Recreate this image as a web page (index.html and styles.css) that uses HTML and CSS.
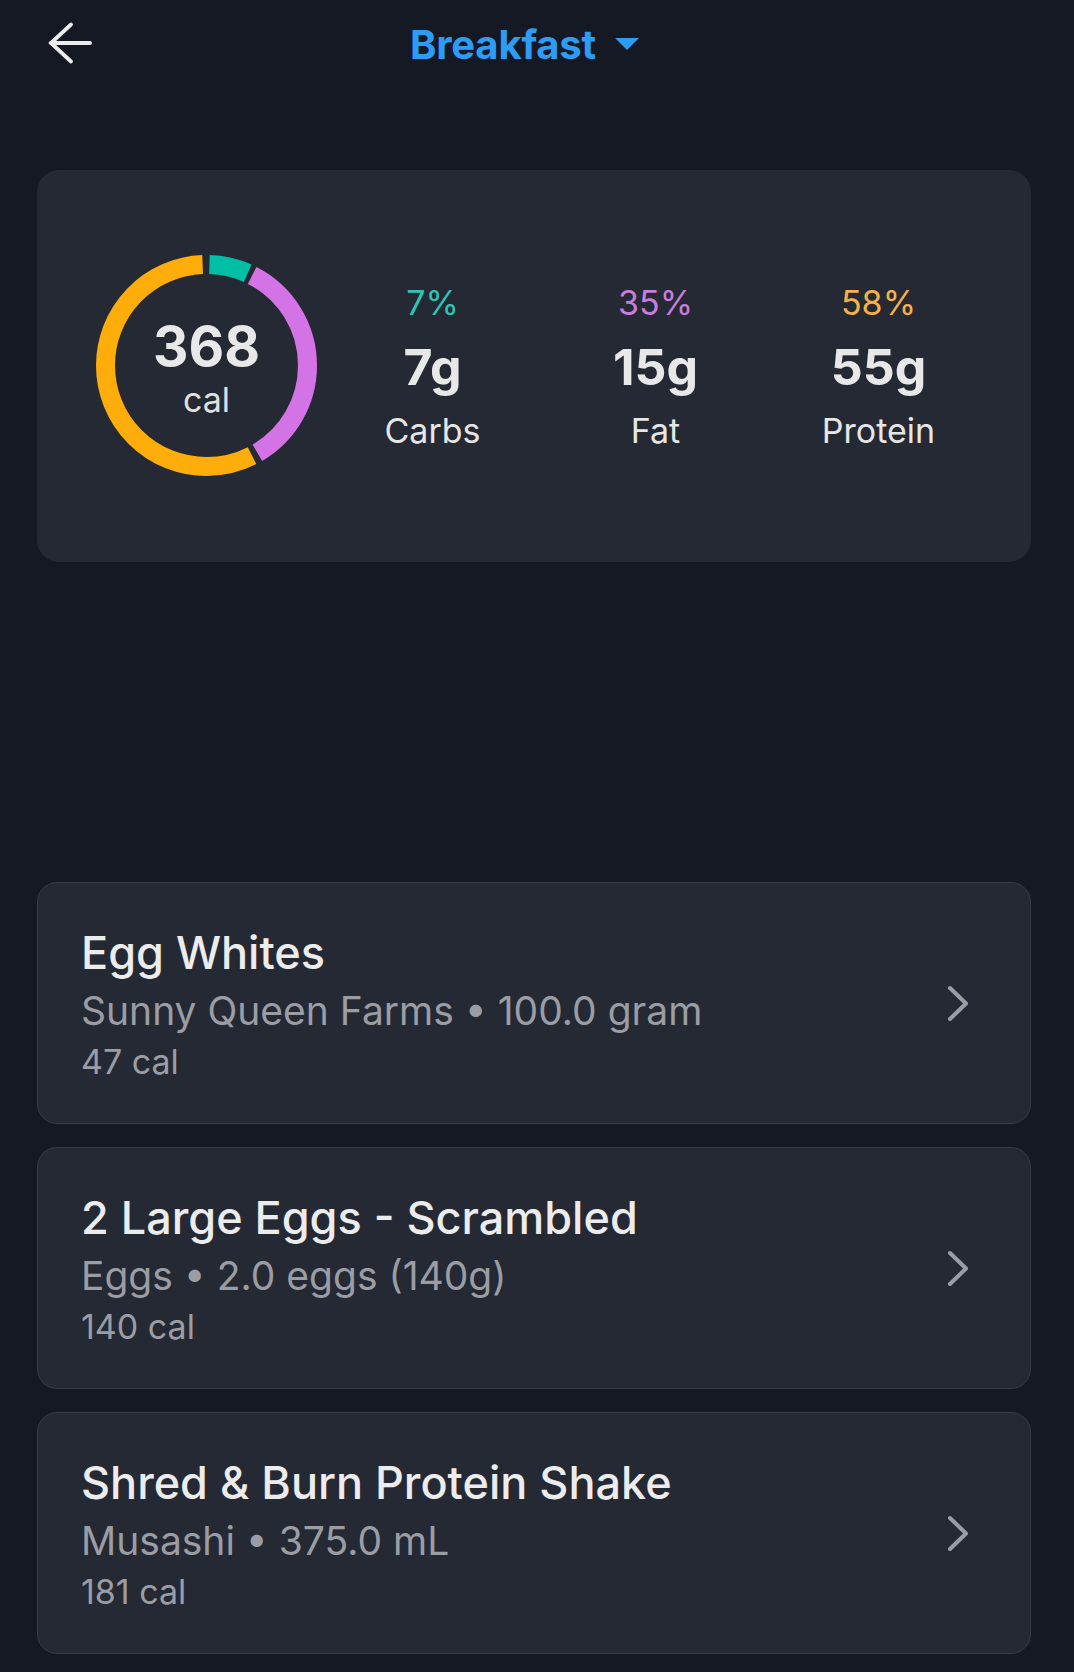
FILE: index.html
```html
<!DOCTYPE html>
<html lang="en">
<head>
<meta charset="utf-8">
<title>Breakfast</title>
<link rel="stylesheet" href="styles.css">
</head>
<body>
<div class="screen">
  <header class="topbar">
    <button class="back" aria-label="Back">
      <svg width="50" height="48" viewBox="0 0 50 48" fill="none" stroke="#ececec" stroke-width="3.8" stroke-linecap="round" stroke-linejoin="miter">
        <line x1="7" y1="24" x2="46" y2="24"/>
        <polyline points="27,5.5 7,24 27,42.5"/>
      </svg>
    </button>
    <div class="title-group">
      <span class="title">Breakfast</span>
      <svg class="caret" width="24" height="12" viewBox="0 0 24 12"><polygon points="0,0 24,0 12,12" fill="#2d9cf4"/></svg>
    </div>
    <div class="spacer"></div>
  </header>

  <section class="summary">
    <div class="donut">
      <svg class="ring" width="221" height="221" viewBox="0 0 221 221">
        <g transform="rotate(-90 110.5 110.5)" fill="none" stroke-width="19">
          <circle cx="110.5" cy="110.5" r="101" stroke="#00bfa5" stroke-dasharray="39.4 600" stroke-dashoffset="-3"/>
          <circle cx="110.5" cy="110.5" r="101" stroke="#d473e6" stroke-dasharray="216.1 600" stroke-dashoffset="-47.4"/>
          <circle cx="110.5" cy="110.5" r="101" stroke="#ffad0a" stroke-dasharray="360.1 600" stroke-dashoffset="-269.5"/>
        </g>
      </svg>
      <div class="donut-label">
        <span class="kcal">368</span>
        <span class="kcal-unit">cal</span>
      </div>
    </div>
    <div class="macros">
      <div class="macro">
        <span class="pct pct-carbs">7%</span>
        <span class="grams">7g</span>
        <span class="name">Carbs</span>
      </div>
      <div class="macro">
        <span class="pct pct-fat">35%</span>
        <span class="grams">15g</span>
        <span class="name">Fat</span>
      </div>
      <div class="macro">
        <span class="pct pct-protein">58%</span>
        <span class="grams">55g</span>
        <span class="name">Protein</span>
      </div>
    </div>
  </section>

  <ul class="foods">
    <li class="food">
      <div class="food-text">
        <div class="food-name">Egg Whites</div>
        <div class="food-meta">Sunny Queen Farms • 100.0 gram</div>
        <div class="food-cal">47 cal</div>
      </div>
      <svg class="chev" width="22" height="37" viewBox="0 0 22 37" fill="none" stroke="#9b9da5" stroke-width="4" stroke-linecap="round" stroke-linejoin="round"><polyline points="3,3 19,18.5 3,34"/></svg>
    </li>
    <li class="food">
      <div class="food-text">
        <div class="food-name">2 Large Eggs - Scrambled</div>
        <div class="food-meta">Eggs • 2.0 eggs (140g)</div>
        <div class="food-cal">140 cal</div>
      </div>
      <svg class="chev" width="22" height="37" viewBox="0 0 22 37" fill="none" stroke="#9b9da5" stroke-width="4" stroke-linecap="round" stroke-linejoin="round"><polyline points="3,3 19,18.5 3,34"/></svg>
    </li>
    <li class="food">
      <div class="food-text">
        <div class="food-name">Shred &amp; Burn Protein Shake</div>
        <div class="food-meta">Musashi • 375.0 mL</div>
        <div class="food-cal">181 cal</div>
      </div>
      <svg class="chev" width="22" height="37" viewBox="0 0 22 37" fill="none" stroke="#9b9da5" stroke-width="4" stroke-linecap="round" stroke-linejoin="round"><polyline points="3,3 19,18.5 3,34"/></svg>
    </li>
  </ul>
</div>
</body>
</html>
```

FILE: styles.css
```css
* { box-sizing: border-box; }

html, body {
  margin: 0;
  padding: 0;
  background: #151924;
}

body {
  font-family: Inter, "Noto Sans", "Liberation Sans", sans-serif;
  color: #ececec;
  width: 1074px;
  min-height: 1672px;
}

.screen {
  display: flex;
  flex-direction: column;
}

.topbar {
  display: grid;
  grid-template-columns: 1fr auto 1fr;
  align-items: center;
  height: 86px;
}

.back {
  justify-self: start;
  margin-left: 44px;
  padding: 0;
  border: 0;
  background: none;
  display: flex;
}

.title-group {
  display: flex;
  align-items: center;
  gap: 19px;
  margin-right: 25px;
  padding-top: 4px;
}

.title {
  font-size: 40px;
  font-weight: 700;
  color: #2d9cf4;
  letter-spacing: -0.2px;
  line-height: 48px;
}

.caret {
  display: block;
  margin-top: -2px;
}

.summary {
  margin: 84px 43px 0 37px;
  height: 392px;
  background: #252934;
  border-radius: 22px;
  display: flex;
  align-items: flex-start;
  padding: 85px 41px 0 59px;
}

.donut {
  position: relative;
  width: 221px;
  height: 221px;
  flex: none;
}

.ring {
  position: absolute;
  left: 0;
  top: 0;
}

.donut-label {
  position: absolute;
  inset: 0;
  display: flex;
  flex-direction: column;
  align-items: center;
  justify-content: center;
  padding-top: 6px;
}

.kcal {
  font-size: 55px;
  font-weight: 700;
  line-height: 62px;
  color: #e8e8e8;
}

.kcal-unit {
  font-size: 34px;
  line-height: 46px;
  color: #e0e0e0;
}

.macros {
  flex: 1;
  display: flex;
  margin-top: 16px;
  margin-left: 4px;
}

.macro {
  flex: 1;
  display: flex;
  flex-direction: column;
  align-items: center;
}

.pct {
  font-size: 34px;
  line-height: 64px;
}

.pct-carbs { color: #2ec4b6; }
.pct-fat { color: #c77ddb; }
.pct-protein { color: #f5b24a; }

.grams {
  font-size: 50px;
  font-weight: 700;
  line-height: 64px;
  color: #e8e8e8;
}

.name {
  font-size: 34px;
  line-height: 64px;
  color: #e6e6e6;
}

.foods {
  list-style: none;
  margin: 320px 43px 0 37px;
  padding: 0;
  display: flex;
  flex-direction: column;
  gap: 23px;
}

.food {
  height: 242px;
  background: #252934;
  border: 1.5px solid #383c48;
  border-radius: 20px;
  display: flex;
  align-items: center;
  padding: 0 61px 0 43px;
}

.food-text {
  flex: 1;
  margin-top: 1px;
}

.food-name {
  font-size: 45px;
  font-weight: 500;
  line-height: 54px;
  color: #ececec;
}

.food-meta {
  font-size: 39px;
  line-height: 62px;
  color: #9b9da5;
}

.food-cal {
  font-size: 34px;
  line-height: 40px;
  color: #9b9da5;
}

.chev {
  flex: none;
  display: block;
}
```
